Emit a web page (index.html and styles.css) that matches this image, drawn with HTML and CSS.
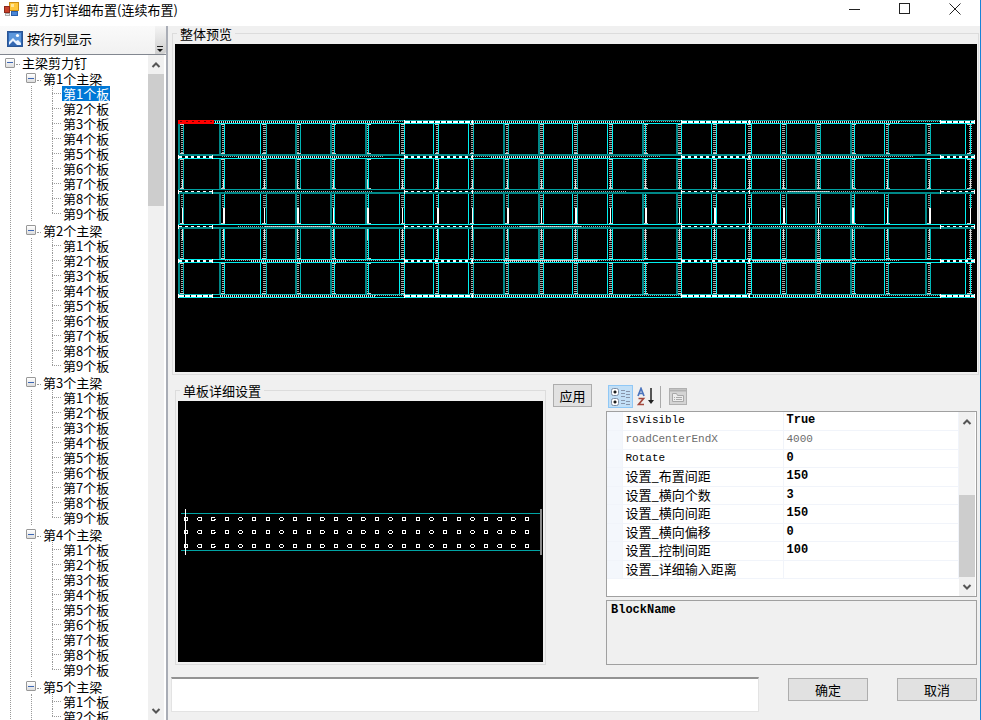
FILE: index.html
```html
<!DOCTYPE html>
<html lang="zh-CN">
<head>
<meta charset="utf-8">
<title>剪力钉详细布置(连续布置)</title>
<link rel="stylesheet" href="styles.css">
</head>
<body>
<div class="window">
  <header class="titlebar">
    <svg class="app-icon" width="16" height="16" viewBox="0 0 16 16">
      <rect x="5.500" y="1.500" width="9" height="8" fill="#ffc83c" stroke="#c98d12"/>
      <rect x="7" y="3" width="3" height="3" fill="#ffe79a"/>
      <rect x=".5" y="5.500" width="5" height="6" fill="#c8402a" stroke="#8d2a1c"/>
      <rect x="7.500" y="10.500" width="6" height="4" fill="#4a86d8" stroke="#2c5fa8"/>
      <rect x="1.500" y="12.500" width="4" height="2" fill="#ececec" stroke="#aaa"/>
    </svg>
    <h1>剪力钉详细布置(连续布置)</h1>
    <div class="window-buttons">
      <button aria-label="最小化"><svg width="14" height="14" viewBox="0 0 14 14"><path d="M1 7.500h11" /></svg></button>
      <button aria-label="最大化"><svg width="14" height="14" viewBox="0 0 14 14"><rect x="1.500" y="1.500" width="10" height="10"/></svg></button>
      <button aria-label="关闭"><svg width="14" height="14" viewBox="0 0 14 14"><path d="M1.500 1.500l11 11M12.500 1.500l-11 11"/></svg></button>
    </div>
  </header>

  <div class="body">
    <aside class="sidebar">
      <div class="toolstrip">
        <button class="strip-button">
          <svg width="16" height="16" viewBox="0 0 16 16">
            <rect x=".5" y=".5" width="15" height="15" fill="#2f65b0" stroke="#2a5594"/>
            <rect x="2" y="2" width="12" height="12" fill="#5c97dc"/>
            <path d="M2 14V11l4-4 3 3 2-1 3 3v2z" fill="#eaf3ff"/>
            <path d="M2 14l4-4 4 4z" fill="#3468b2"/>
            <circle cx="10.500" cy="4.500" r="1.600" fill="#fff"/>
          </svg>
          <span>按行列显示</span>
        </button>
        <button class="overflow" aria-label="更多"><svg width="10" height="12" viewBox="0 0 10 12"><path d="M2 4.500h6" stroke="#222"/><path d="M2 7h6l-3 3z" fill="#111"/></svg></button>
      </div>
      <div class="tree-box">
        <nav class="tree">
          <div class="root"><button class="toggle" aria-label="折叠"></button><a href="#">主梁剪力钉</a></div>
          <ul class="groups">
            <li><div class="beam"><button class="toggle" aria-label="折叠"></button><a href="#">第1个主梁</a></div>
              <ul class="plates">
                <li><a href="#" class="selected">第1个板</a></li>
                <li><a href="#">第2个板</a></li>
                <li><a href="#">第3个板</a></li>
                <li><a href="#">第4个板</a></li>
                <li><a href="#">第5个板</a></li>
                <li><a href="#">第6个板</a></li>
                <li><a href="#">第7个板</a></li>
                <li><a href="#">第8个板</a></li>
                <li><a href="#">第9个板</a></li>
              </ul></li>
            <li><div class="beam"><button class="toggle" aria-label="折叠"></button><a href="#">第2个主梁</a></div>
              <ul class="plates">
                <li><a href="#">第1个板</a></li>
                <li><a href="#">第2个板</a></li>
                <li><a href="#">第3个板</a></li>
                <li><a href="#">第4个板</a></li>
                <li><a href="#">第5个板</a></li>
                <li><a href="#">第6个板</a></li>
                <li><a href="#">第7个板</a></li>
                <li><a href="#">第8个板</a></li>
                <li><a href="#">第9个板</a></li>
              </ul></li>
            <li><div class="beam"><button class="toggle" aria-label="折叠"></button><a href="#">第3个主梁</a></div>
              <ul class="plates">
                <li><a href="#">第1个板</a></li>
                <li><a href="#">第2个板</a></li>
                <li><a href="#">第3个板</a></li>
                <li><a href="#">第4个板</a></li>
                <li><a href="#">第5个板</a></li>
                <li><a href="#">第6个板</a></li>
                <li><a href="#">第7个板</a></li>
                <li><a href="#">第8个板</a></li>
                <li><a href="#">第9个板</a></li>
              </ul></li>
            <li><div class="beam"><button class="toggle" aria-label="折叠"></button><a href="#">第4个主梁</a></div>
              <ul class="plates">
                <li><a href="#">第1个板</a></li>
                <li><a href="#">第2个板</a></li>
                <li><a href="#">第3个板</a></li>
                <li><a href="#">第4个板</a></li>
                <li><a href="#">第5个板</a></li>
                <li><a href="#">第6个板</a></li>
                <li><a href="#">第7个板</a></li>
                <li><a href="#">第8个板</a></li>
                <li><a href="#">第9个板</a></li>
              </ul></li>
            <li><div class="beam"><button class="toggle" aria-label="折叠"></button><a href="#">第5个主梁</a></div>
              <ul class="plates">
                <li><a href="#">第1个板</a></li>
                <li><a href="#">第2个板</a></li>
              </ul></li>
          </ul>
        </nav>
        <div class="scrollbar tree-scroll">
          <button aria-label="向上"><svg width="10" height="8" viewBox="0 0 10 8"><path d="M1.500 6L5 2.500 8.500 6"/></svg></button>
          <div class="track"><div class="thumb"></div></div>
          <button aria-label="向下"><svg width="10" height="8" viewBox="0 0 10 8"><path d="M1.500 2L5 5.500 8.500 2"/></svg></button>
        </div>
      </div>
    </aside>

    <main class="main">
      <fieldset class="group overview">
        <legend>整体预览</legend>
        <svg id="overview" class="canvas" viewBox="175 44 802 328" shape-rendering="crispEdges"></svg>
      </fieldset>

      <div class="lower">
        <fieldset class="group detail">
          <legend>单板详细设置</legend>
          <svg id="detail" class="canvas" viewBox="178 401 365 261" shape-rendering="crispEdges"></svg>
        </fieldset>
        <button class="push apply">应用</button>
        <section class="properties">
          <div class="prop-tools">
            <button class="active" aria-label="按分类"><svg width="20" height="20" viewBox="0 0 20 20">
              <g fill="#fff" stroke="#7d8da3"><rect x=".5" y="1.500" width="7" height="7" rx="2"/><rect x=".5" y="11.500" width="7" height="7" rx="2"/></g>
              <path d="M2.500 5h3M4 3.500v3M2.500 15h3M4 13.500v3" stroke="#111" stroke-width="1.500"/>
              <path d="M10 3.500h4M10 6.500h4M10 9.500h4M10 13.500h4M10 16.500h4M15 4.500h4M15 7.500h4M15 10.500h4M15 14.500h4M15 17.500h4" stroke="#8795aa"/>
            </svg></button>
            <button aria-label="按字母顺序"><svg width="18" height="20" viewBox="0 0 18 20">
              <path d="M1 9L4 1.500 7 9M2 6.500h4" fill="none" stroke="#4b74bd" stroke-width="1.700"/>
              <path d="M1.500 11.500h5l-5 6h5.500" fill="none" stroke="#a3483d" stroke-width="1.700"/>
              <path d="M14 1v14" stroke="#222" stroke-width="1.500"/><path d="M11 13h6l-3 4z" fill="#222"/>
            </svg></button>
            <span class="divider"></span>
            <button aria-label="属性页" disabled><svg width="18" height="18" viewBox="0 0 18 18">
              <rect x=".5" y=".5" width="17" height="16" fill="#d4d4d4" stroke="#b0b0b0"/><path d="M1 2.500h16" stroke="#b0b0b0" stroke-width="2"/>
              <path d="M3.500 13.500v-8h4l1 2h6v6z" fill="#ececec" stroke="#a8a8a8"/><path d="M5 9.500h1M7 9.500h6M5 11.500h1M7 11.500h6" stroke="#aaa"/>
            </svg></button>
          </div>
          <div class="prop-box">
            <table class="prop-table">
              <colgroup><col class="c-indent"><col class="c-name"><col></colgroup>
              <tbody>
                <tr><td></td><th class="latin" scope="row">IsVisible</th><td>True</td></tr>
                <tr class="readonly"><td></td><th class="latin" scope="row">roadCenterEndX</th><td>4000</td></tr>
                <tr><td></td><th class="latin" scope="row">Rotate</th><td>0</td></tr>
                <tr><td></td><th scope="row">设置_布置间距</th><td>150</td></tr>
                <tr><td></td><th scope="row">设置_横向个数</th><td>3</td></tr>
                <tr><td></td><th scope="row">设置_横向间距</th><td>150</td></tr>
                <tr><td></td><th scope="row">设置_横向偏移</th><td>0</td></tr>
                <tr><td></td><th scope="row">设置_控制间距</th><td>100</td></tr>
                <tr><td></td><th scope="row">设置_详细输入距离</th><td></td></tr>
              </tbody>
            </table>
            <div class="scrollbar prop-scroll">
              <button aria-label="向上"><svg width="10" height="8" viewBox="0 0 10 8"><path d="M1.500 6L5 2.500 8.500 6"/></svg></button>
              <div class="track"><div class="thumb"></div></div>
              <button aria-label="向下"><svg width="10" height="8" viewBox="0 0 10 8"><path d="M1.500 2L5 5.500 8.500 2"/></svg></button>
            </div>
          </div>
          <div class="prop-help">BlockName</div>
        </section>
      </div>

      <footer class="footer">
        <input type="text" aria-label="详细输入距离">
        <button class="push">确定</button>
        <button class="push">取消</button>
      </footer>
    </main>
  </div>
</div>
<script src="drawing.js"></script>
</body>
</html>
```
FILE: styles.css
```css
* { box-sizing: border-box; }

body {
  margin: 0;
  background: #f0f0f0;
  color: #000;
  font: 13px/15px "Noto Sans CJK SC", sans-serif;
}

button { margin: 0; padding: 0; border: 0; background: none; font: inherit; color: inherit; }
a { color: inherit; text-decoration: none; }
ul { margin: 0; padding: 0; list-style: none; }
svg { display: block; }

.window {
  display: flex;
  flex-direction: column;
  height: 100vh;
  overflow: hidden;
  border-right: 1px solid #1883d7;
}

/* Title bar */
.titlebar {
  display: flex;
  flex: none;
  height: 26px;
  padding: 0 0 8px 4px;
  align-items: center;
  background: #fff;
}
.titlebar h1 { flex: 1; margin: 0 0 0 6px; font-size: 13px; font-weight: 400; }
.window-buttons { display: flex; }
.window-buttons button { display: flex; width: 50px; height: 18px; align-items: center; justify-content: center; }
.window-buttons svg { fill: none; stroke: #222; }

.body { display: flex; flex: 1; min-height: 0; }

/* Sidebar */
.sidebar {
  display: flex;
  flex: none;
  flex-direction: column;
  width: 168px;
  border-right: 2px solid #a9adb6;
}
.toolstrip {
  display: flex;
  flex: none;
  height: 28px;
  justify-content: space-between;
  background: linear-gradient(#fafafa, #f1f1f1);
}
.strip-button { display: flex; gap: 4px; padding: 0 0 3px 7px; align-items: center; }
.overflow { display: flex; width: 11px; align-items: flex-end; background: linear-gradient(#f4f4f4, #cfcfcf); border-radius: 0 0 3px 0; }
.tree-box { display: flex; flex: 1; min-height: 0; border-top: 1px solid #828790; background: #fff; }
.tree { flex: 1; overflow: hidden; padding: 0 0 0 5px; white-space: nowrap; }
.tree-scroll { margin-right: 2px; }

.root, .beam { display: flex; height: 15px; align-items: center; }
.beam { height: 16px; }
.toggle {
  flex: none;
  width: 10px;
  height: 10px;
  border: 1px solid #989898;
  border-radius: 1px;
  background: linear-gradient(#3c66b4, #3c66b4) center / 6px 1px no-repeat, linear-gradient(#fff, #ddd);
}
.toggle::after { content: ""; display: block; width: 4px; margin: 4px 0 0 10px; border-top: 1px dotted #999; }
.root a, .beam a { margin-left: 7px; }
.groups { margin-left: 5px; padding-left: 15px; border-left: 1px dotted #999; }
.groups > li { padding-bottom: 1px; }
.plates { margin-left: 5px; padding-left: 20px; border-left: 1px dotted #999; }
.plates > li {
  display: flex;
  height: 15px;
  align-items: center;
  background: repeating-linear-gradient(#999 0 1px, #fff 1px 2px) 0 0 / 1px 100% no-repeat;
}
.plates > li:last-child { background-size: 1px 8px; }
.plates > li::before { content: ""; width: 9px; margin-right: 1px; border-top: 1px dotted #999; }
.plates a { padding: 0 1px; }
.plates .selected { background: #0078d7; color: #fff; }

/* Scroll bars */
.scrollbar { display: flex; flex: none; flex-direction: column; width: 16px; background: #f0f0f0; }
.scrollbar button { display: flex; height: 19px; align-items: center; justify-content: center; }
.scrollbar svg { fill: none; stroke: #555; stroke-width: 2; }
.track { display: flex; flex: 1; flex-direction: column; min-height: 0; }
.thumb { background: #cdcdcd; }
.tree-scroll .thumb { height: 21%; }
.prop-scroll .track { justify-content: flex-end; }
.prop-scroll .thumb { height: 56%; }

/* Main area */
.main { flex: 1; min-width: 0; padding: 0 3px; }
.group { min-width: 0; margin: 0; padding: 3px 2px 2px; border: 1px solid #dcdcdc; }
.group legend { margin-left: 2px; padding: 0 3px; line-height: 15px; }
.canvas { width: 100%; height: auto; background: #000; }
.overview { margin-left: 1px; margin-right: -2px; padding-right: 1px; }
.lower { display: grid; grid-template-columns: 1fr 60px 1fr; margin: 8px 0 0 4px; }
.apply { margin: 1px 14px 0 7px; }

.push {
  height: 23px;
  border: 1px solid #adadad;
  background: #e1e1e1;
  line-height: 19px;
}

/* Property grid */
.properties { display: flex; flex-direction: column; min-width: 0; }
.prop-tools { display: flex; height: 28px; padding: 2px 2px 3px; align-items: center; }
.prop-tools button { display: flex; width: 25px; height: 23px; align-items: center; justify-content: center; }
.prop-tools .active { border: 1px solid #90c8f6; background: #c2dff6; }
.divider { width: 1px; height: 22px; margin: 0 4px 0 2px; background: #aaa; }
.prop-box { display: flex; flex: 1; border: 1px solid #a0a0a0; background: #fff; padding-right: 1px; }
.prop-table { flex: 1; width: 100%; align-self: flex-start; table-layout: fixed; border-collapse: collapse; }
.c-indent { width: 15px; }
.c-name { width: 161px; }
.prop-table tr { height: 18px; }
.prop-table tr:nth-child(even) { height: 19px; }
.prop-table td, .prop-table th {
  padding: 0 3px 2px;
  border-bottom: 1px solid #f1f4fa;
  border-right: 1px solid #f1f4fa;
  font-weight: 400;
  line-height: 15px;
  text-align: left;
  white-space: nowrap;
}
.prop-table td:first-child { background: #f4f7fc; }
.prop-table .latin { padding: 1px 3px; font: 11px/15px "Liberation Mono", monospace; }
.prop-table td:last-child { padding: 1px 3px; font: 700 12px/15px "Liberation Mono", monospace; }
.prop-table .readonly th, .prop-table .readonly td:last-child { color: #6d6d6d; font-weight: 400; font-size: 11px; }
.prop-help {
  height: 65px;
  margin-top: 3px;
  padding: 2px 4px;
  border: 1px solid #a0a0a0;
  font: 700 12px/15px "Liberation Mono", monospace;
}

/* Footer */
.footer { display: flex; margin-top: 12px; align-items: flex-start; }
.footer input {
  flex: 1;
  min-width: 0;
  height: 35px;
  padding: 0 4px;
  border: 1px solid #e3e3e3;
  border-top: 2px solid #929292;
  background: #fff;
  font: inherit;
}
.footer .push { width: 80px; margin: 1px 0 0 29px; }
```
FILE: drawing.js
```js
function add(svg, tag, attrs) {
  const el = document.createElementNS("http://www.w3.org/2000/svg", tag);
  for (const key in attrs) el.setAttribute(key, attrs[key]);
  svg.appendChild(el);
}
function box(svg, x, y, width, height, fill) {
  add(svg, "rect", { x, y, width, height, fill });
}
function dashes(svg, x1, y1, x2, y2, width, dash, stroke) {
  add(svg, "line", { x1, y1, x2, y2, stroke, "stroke-width": width, "stroke-dasharray": dash });
}

const CYAN = "#00f0f0", TEAL = "#008888";
const plan = document.getElementById("overview");

// Cross beams: left edge, right edge, stud line, and which edge is drawn wide
const beams = [
  [178, 183, 182, 0], [219, 224, 223, 0], [260, 266, 264, 1], [295, 300, 297, 0], [330, 334, 333, 0],
  [365, 368, 367, 0], [399, 404, 402, 1], [433, 438, 437, 1], [468, 473, 472, 1], [503, 508, 507, 0],
  [538, 543, 541, 0], [572, 577, 575, 1], [607, 612, 610, 1], [642, 645, 645, 0], [676, 681, 679, 0],
  [711, 716, 714, 1], [745, 751, 749, 1], [780, 786, 783, 1], [815, 820, 818, 0], [850, 854, 852, 0],
  [884, 888, 887, 1], [925, 930, 929, 0], [965, 970, 970, 1]
];
const cells = [[124, 154], [159, 189], [193, 224], [228, 259], [263, 294]];
beams.forEach(([left, right, stud, sharp], i) => {
  cells.forEach(([top, bottom], row) => {
    const wide = sharp ? 1 : 2;
    const mid = Math.round((top + bottom) / 2);
    if (row === 2) {
      dashes(plan, stud + 0.5, top, stud + 0.5, mid, 3, "1 1", "#999");
    } else {
      dashes(plan, stud + 0.5, top, stud + 0.5, bottom, 3, "1 1", "#aaa");
    }
    box(plan, left, top, wide, bottom - top, sharp ? CYAN : TEAL);
    box(plan, right, top, 1, bottom - top, (i + sharp) % 3 ? CYAN : "#00b4b4");
    if (row === 2) box(plan, stud, mid - 1, i % 2 ? 2 : 1, bottom - mid, "#fff");
    if (row === 1) box(plan, stud, bottom - 10, 1, 10, "#ddd");
    if (row === 3) box(plan, stud, top, 1, 12, "#ddd");
    box(plan, left + 2, top, 4, 1, "#ccc");
    box(plan, left + 2, bottom - 1, 4, 1, "#ccc");
  });
});

// Main girders: two flange lines each, with the stud row between them
const girders = [
  [[120, 1, "#00a0a0"], [123, 1, CYAN], 121],
  [[154, 2, TEAL], [158, 1, CYAN], 156],
  [[189, 1, "#00a0a0"], [192, 2, TEAL], 191],
  [[224, 1, CYAN], [227, 2, TEAL], 226],
  [[259, 1, CYAN], [262, 1, CYAN], 260],
  [[294, 1, "#00b8b8"], [297, 1, CYAN], 295]
];
const bright = [
  [[213, 394], [473, 645], [750, 899]],
  [[238, 359], [491, 610], [750, 864]],
  [[283, 314], [535, 567], [788, 829]],
  [[265, 330], [520, 582], [771, 833]],
  [[251, 346], [504, 597], [753, 850]],
  [[220, 375], [473, 630], [753, 881]]
];
const faint = [
  [[394, 404], [645, 681], [899, 940]],
  [[222, 383], [473, 660], [750, 914]],
  [[225, 373], [473, 626], [753, 879]],
  [[238, 359], [491, 610], [753, 864]],
  [[225, 394], [473, 645], [750, 899]],
  [[375, 404], [630, 681], [881, 940]]
];
const splices = [[178, 213], [404, 473], [681, 750], [940, 975]];
girders.forEach(([upper, lower, y], i) => {
  box(plan, 178, y - 1, 797, 4, "#000");
  box(plan, 178, upper[0], 797, upper[1], upper[2]);
  box(plan, 178, lower[0], 797, lower[1], lower[2]);
  const tall = i === 2 || i === 3 ? 1 : 2;
  faint[i].forEach(([a, b]) => dashes(plan, a, y + 0.5, b, y + 0.5, 1, "1 1", "#aaa"));
  bright[i].forEach(([a, b]) => dashes(plan, a, y + tall / 2, b, y + tall / 2, tall, "1 1", "#ddd"));
  splices.forEach(([a, b]) => {
    dashes(plan, a + 1, y + tall / 2, b, y + tall / 2, tall, i === 0 || i === 5 ? "5 1" : "3 3", "#fff");
    box(plan, a, y - 1, 1, 4, "#fff");
    box(plan, b - 1, y - 1, 1, 4, "#fff");
  });
});
// Selected plate
box(plan, 178, 120, 36, 4, "#f00");
dashes(plan, 180, 121.5, 212, 121.5, 1, "2 4", "#600");

const plate = document.getElementById("detail");
box(plate, 181, 513, 360, 1, "#00a4a4");
box(plate, 181, 550, 360, 1, "#00a4a4");
box(plate, 185, 509, 1, 46, "#fff");
box(plate, 540, 509, 2, 46, "#888");
[519, 532, 546].forEach(cy => {
  for (let i = 0; i < 26; i++) {
    add(plate, "circle", { cx: 186 + i * 13.64, cy, r: 1.9, fill: "none", stroke: "#fff", "stroke-width": 1 });
  }
});
```
